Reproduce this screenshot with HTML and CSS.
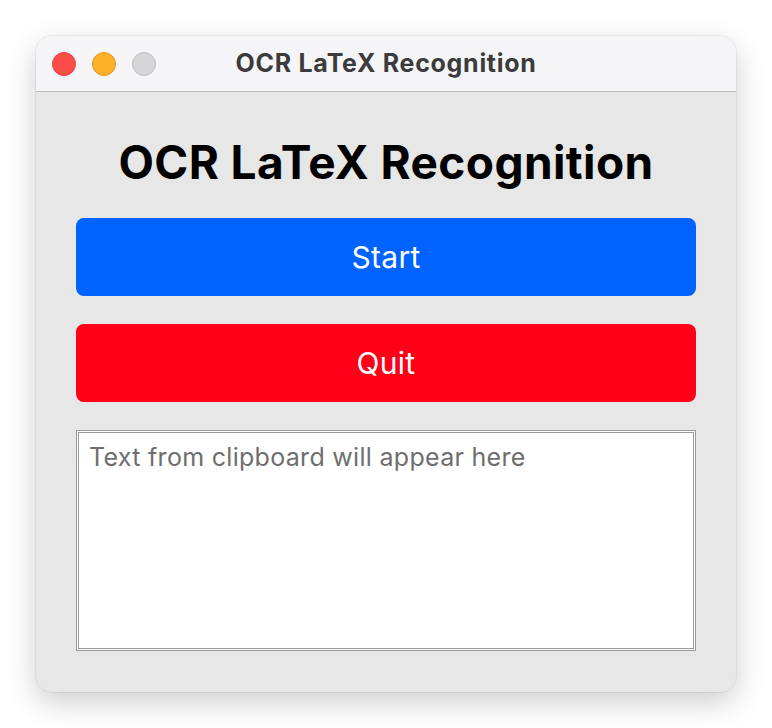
FILE: index.html
```html
<!DOCTYPE html>
<html>
<head>
<meta charset="utf-8">
<link rel="stylesheet" href="styles.css">
</head>
<body>
<div class="window">
  <div class="titlebar">
    <div class="lights">
      <span class="light red"></span>
      <span class="light yellow"></span>
      <span class="light gray"></span>
    </div>
    <div class="title">OCR LaTeX Recognition</div>
  </div>
  <div class="content">
    <h1 class="heading">OCR LaTeX Recognition</h1>
    <button class="btn start">Start</button>
    <button class="btn quit">Quit</button>
    <div class="textbox"><span class="placeholder">Text from clipboard will appear here</span></div>
  </div>
</div>
</body>
</html>
```
FILE: styles.css
```css
html, body { margin: 0; padding: 0; background: #ffffff; }
body { padding: 36px; font-family: Inter, "Noto Sans", sans-serif; }
.window {
  width: 700px;
  height: 656px;
  border-radius: 16px;
  background: #e7e7e7;
  box-shadow: 0 0 0 1px rgba(0,0,0,0.05), 0 10px 30px rgba(0,0,0,0.2);
  overflow: hidden;
  display: flex;
  flex-direction: column;
}
.titlebar {
  height: 55px;
  background: #f5f5f7;
  border-bottom: 1px solid #bcbcbc;
  display: flex;
  align-items: center;
  justify-content: center;
  position: relative;
}
.lights {
  position: absolute;
  left: 16px;
  top: 16px;
  display: flex;
  gap: 16px;
}
.light {
  width: 22px; height: 22px; border-radius: 50%;
  display: block;
}
.red { background: #fe4c48; border: 1px solid #e0423c; }
.yellow { background: #fdb12a; border: 1px solid #e19a1d; }
.gray { background: #d6d6d8; border: 1px solid #bdbdbf; }
.title {
  font-size: 25px;
  font-weight: 700;
  letter-spacing: 0.7px;
  color: #3b3b3b;
  margin-top: -2px;
}
.content {
  padding: 0 40px;
  display: flex;
  flex-direction: column;
}
.heading {
  margin: 42px 0 0;
  height: 56px;
  line-height: 56px;
  text-align: center;
  font-size: 46px;
  font-weight: 700;
  color: #000;
  letter-spacing: 0.4px;
}
.btn {
  border: none;
  height: 78px;
  border-radius: 8px;
  color: #fff;
  font-family: Inter, "Noto Sans", sans-serif;
  font-size: 30px;
  letter-spacing: 0.3px;
  padding: 0;
}
.start { background: #0062ff; margin-top: 28px; }
.quit { background: #ff0019; margin-top: 28px; }
.textbox {
  box-sizing: border-box;
  margin-top: 28px;
  height: 221px;
  border: 3px double #9a9a9a;
  background: #fff;
  padding: 9px 10px;
}
.placeholder {
  font-size: 25px;
  letter-spacing: 0.3px;
  color: #6e6e6e;
}
```
